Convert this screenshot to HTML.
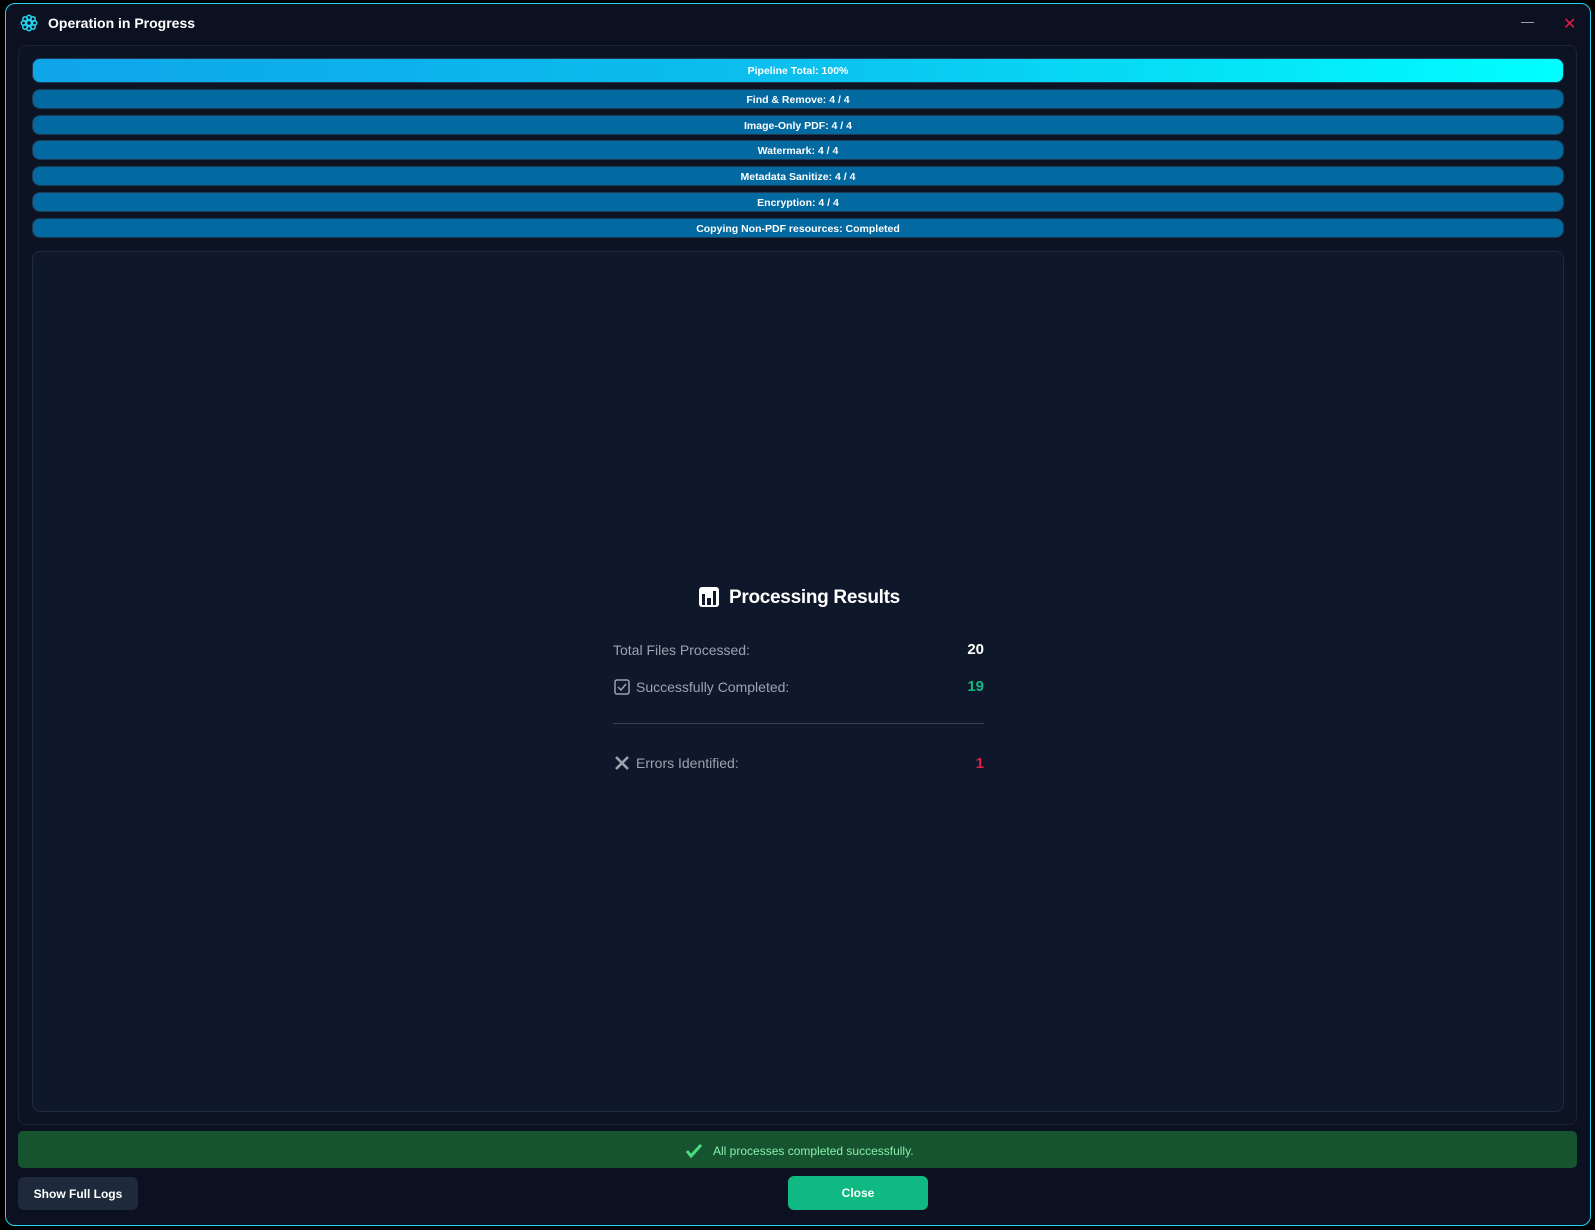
<!DOCTYPE html>
<html><head><style>
*{box-sizing:border-box;margin:0;padding:0}
body{width:1595px;height:1230px;background:#000;font-family:"Liberation Sans",sans-serif;position:relative;overflow:hidden}
.win{position:absolute;left:5px;top:3px;width:1586px;height:1223px;background:#0b1120;border:1.5px solid #22d3ee;border-radius:10px}
.abs{position:absolute}
.title{left:48px;top:15px;color:#fff;font-weight:bold;font-size:14px}
.panel{left:18px;top:45px;width:1559px;height:1080px;border:1px solid #1a2233;border-radius:8px;background:#0c1322}
.bar{position:absolute;left:32px;width:1532px;height:20px;border-radius:8px;background:#0369a1;border:1.5px solid #1e3a55;color:#fff;font-size:10.5px;font-weight:bold;text-align:center;line-height:20px}
.res{left:32px;top:251px;width:1532px;height:861px;border:1px solid #1f2a3d;border-radius:8px;background:#0f172a}
.lbl{color:#9ca3af;font-size:14px}
.val{font-size:15px;font-weight:bold;text-align:right;width:60px}
</style></head><body>
<div class="win"></div>
<svg class="abs" style="left:20px;top:14px" width="18" height="18" viewBox="0 0 18 18" fill="none" stroke="#22d3ee" stroke-width="1.6"><circle cx="9" cy="9" r="2.5"/><circle cx="9" cy="3.5" r="2.2"/><circle cx="9" cy="14.5" r="2.2"/><circle cx="3.5" cy="9" r="2.2"/><circle cx="14.5" cy="9" r="2.2"/><circle cx="5" cy="5" r="2.2"/><circle cx="13" cy="5" r="2.2"/><circle cx="5" cy="13" r="2.2"/><circle cx="13" cy="13" r="2.2"/></svg>
<div class="abs title">Operation in Progress</div>
<div class="abs" style="left:1521px;top:22px;width:13px;height:1px;background:#9ca3af"></div>
<div class="abs" style="left:1563px;top:14px;color:#e11d48;font-size:16px">✕</div>
<div class="abs panel"></div>
<div class="bar" style="top:58px;height:25px;line-height:25px;background:linear-gradient(90deg,#0ea5e9,#0bc0ee 50%,#00ffff)">Pipeline Total: 100%</div>
<div class="bar" style="top:89px">Find &amp; Remove: 4 / 4</div>
<div class="bar" style="top:115px">Image-Only PDF: 4 / 4</div>
<div class="bar" style="top:140px">Watermark: 4 / 4</div>
<div class="bar" style="top:166px">Metadata Sanitize: 4 / 4</div>
<div class="bar" style="top:192px">Encryption: 4 / 4</div>
<div class="bar" style="top:218px">Copying Non-PDF resources: Completed</div>
<div class="abs res"></div>
<svg class="abs" style="left:698px;top:586px" width="22" height="22" viewBox="0 0 22 22"><rect x="1" y="1" width="20" height="20" rx="3" fill="#fff"/><rect x="4" y="8" width="3" height="11" fill="#0f172a"/><rect x="9" y="12" width="4" height="7" fill="#0f172a"/><rect x="15" y="5" width="3" height="14" fill="#0f172a"/></svg>
<div class="abs" style="left:729px;top:587px;color:#fff;font-size:19px;font-weight:bold;letter-spacing:-0.3px">Processing Results</div>
<div class="abs lbl" style="left:613px;top:642px">Total Files Processed:</div>
<div class="abs val" style="left:924px;top:641px;color:#fff">20</div>
<svg class="abs" style="left:614px;top:679px" width="16" height="16" viewBox="0 0 16 16" fill="none" stroke="#9ca3af" stroke-width="1.5"><rect x="1" y="1" width="14" height="14" rx="2"/><path d="M4 8l3 3 5-6"/></svg>
<div class="abs lbl" style="left:636px;top:679px">Successfully Completed:</div>
<div class="abs val" style="left:924px;top:678px;color:#10b981">19</div>
<div class="abs" style="left:613px;top:723px;width:371px;height:1px;background:#374151"></div>
<svg class="abs" style="left:614px;top:755px" width="16" height="16" viewBox="0 0 16 16" stroke="#9ca3af" stroke-width="2.6"><path d="M2 2l12 12M14 2L2 14"/></svg>
<div class="abs lbl" style="left:636px;top:755px">Errors Identified:</div>
<div class="abs val" style="left:924px;top:755px;color:#e11d48">1</div>
<div class="abs" style="left:18px;top:1131px;width:1559px;height:37px;background:#16532f;border-radius:5px"></div>
<svg class="abs" style="left:686px;top:1144px" width="16" height="14" viewBox="0 0 16 14" fill="none" stroke="#4ade80" stroke-width="3"><path d="M1 7l4 5L15 1"/></svg>
<div class="abs" style="left:713px;top:1144px;color:#86efac;font-size:12px">All processes completed successfully.</div>
<div class="abs" style="left:18px;top:1177px;width:120px;height:33px;background:#1e293b;border-radius:6px;color:#fff;font-size:12px;font-weight:bold;text-align:center;line-height:34px">Show Full Logs</div>
<div class="abs" style="left:788px;top:1176px;width:140px;height:34px;background:#10b981;border-radius:6px;color:#fff;font-size:12px;font-weight:bold;text-align:center;line-height:35px">Close</div>
</body></html>
